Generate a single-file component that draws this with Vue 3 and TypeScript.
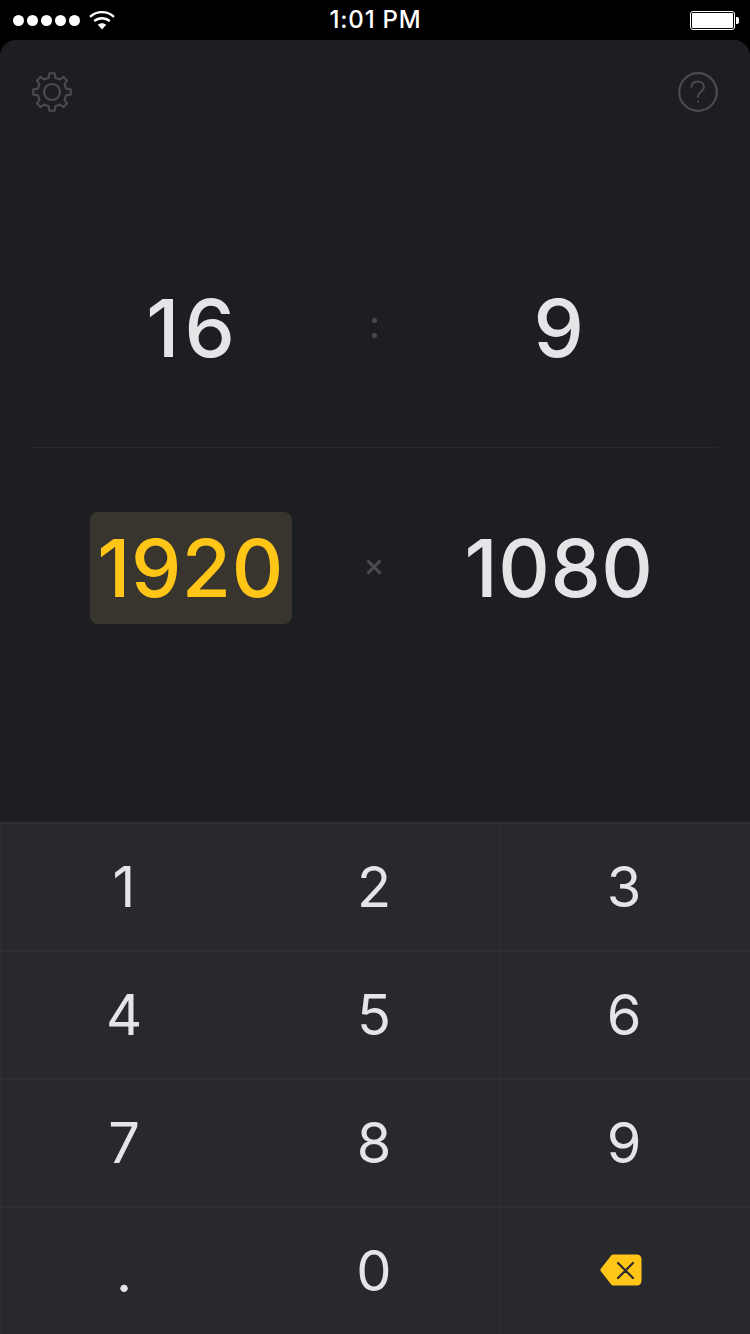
<template>
  <div class="screen">
    <div class="status">
      <div class="status-left">
        <div class="dots"><i v-for="n in 5" :key="n"></i></div>
        <svg class="wifi" width="26" height="20" viewBox="0 0 26 20">
          <path d="M1 6.8C8 .6 18 .6 25 6.8" fill="none" stroke="#fff" stroke-width="2.4" />
          <path d="M5.2 11.2C9.8 7.2 16.2 7.2 20.8 11.2" fill="none" stroke="#fff" stroke-width="2.4" />
          <path d="M8.8 14.8C11.2 12.8 14.8 12.8 17.2 14.8L13 19.4Z" fill="#fff" />
        </svg>
      </div>
      <div class="time">1:01 PM</div>
      <div class="battery"><div class="battery-body"><div class="battery-fill"></div></div><div class="battery-cap"></div></div>
    </div>

    <div class="app">
      <div class="toolbar">
        <svg width="42" height="42" viewBox="0 0 42 42" fill="none" stroke="#4a4b50" stroke-width="2.2" stroke-linejoin="round">
          <path :d="gearPath" />
          <circle cx="21" cy="21" r="8" />
        </svg>
        <svg width="42" height="42" viewBox="0 0 42 42" fill="none" stroke="#4a4b50" stroke-width="2.2" stroke-linecap="round">
          <circle cx="21" cy="21" r="18.8" />
          <path d="M14.5 16C14.8 12.3 17.5 10.5 20.6 10.5C24.2 10.5 27 12.7 27 15.9C27 20.1 21 20.7 21 26" stroke-width="2" />
          <circle cx="21" cy="30.6" r="1.1" fill="#4a4b50" stroke="none" />
        </svg>
      </div>

      <div class="values ratio">
        <div class="cell"><span class="num pair">16</span></div>
        <div class="sep colon"><i></i><i></i></div>
        <div class="cell"><span class="num">9</span></div>
      </div>
      <div class="divider"></div>
      <div class="values size">
        <div class="cell"><span class="num active">1920</span></div>
        <div class="sep">
          <svg width="18" height="18" viewBox="0 0 18 18" stroke="#4a4b50" stroke-width="3"><path d="M2.5 2.5 15.5 15.5M15.5 2.5 2.5 15.5" /></svg>
        </div>
        <div class="cell"><span class="num">1080</span></div>
      </div>
    </div>

    <div class="keypad">
      <div v-for="k in keys" :key="k" class="key">
        <svg v-if="k === 'del'" class="del" width="42" height="32" viewBox="0 0 42 32">
          <path d="M13 0.5H37A4.5 4.5 0 0 1 41.5 5V27A4.5 4.5 0 0 1 37 31.5H13A2.5 2.5 0 0 1 11.4 30.8L1 17.6A2.5 2.5 0 0 1 1 14.4L11.4 1.2A2.5 2.5 0 0 1 13 0.5Z" fill="#ffc517" />
          <path d="M18 9 33 24M33 9 18 24" stroke="#2a2b2f" stroke-width="2.2" stroke-linecap="round" />
        </svg>
        <span v-else :class="{ dot: k === '.' }">{{ k }}</span>
      </div>
    </div>
  </div>
</template>

<script setup lang="ts">
const keys = ["1", "2", "3", "4", "5", "6", "7", "8", "9", ".", "0", "del"];

// eight-toothed cog outline, generated so the teeth stay even
function buildGear(): string {
  const teeth = 8;
  const outer = 18.9;
  const inner = 14.6;
  const pts: string[] = [];
  for (let i = 0; i < teeth; i++) {
    const a = (i / teeth) * Math.PI * 2 - Math.PI / 2;
    const step = (Math.PI * 2) / teeth;
    const list: [number, number][] = [
      [inner, a - step * 0.3],
      [outer, a - step * 0.17],
      [outer, a + step * 0.17],
      [inner, a + step * 0.3],
    ];
    for (const [r, t] of list) {
      pts.push(`${(21 + r * Math.cos(t)).toFixed(2)} ${(21 + r * Math.sin(t)).toFixed(2)}`);
    }
  }
  return "M" + pts.join("L") + "Z";
}

const gearPath = buildGear();
</script>

<style>
body {
  background: #000;
}
</style>

<style scoped>
.screen {
  width: 750px;
  height: 1334px;
  overflow: hidden;
  display: flex;
  flex-direction: column;
  background: #000;
  font-family: Inter, "Liberation Sans", sans-serif;
}

.status {
  height: 40px;
  flex: none;
  display: grid;
  grid-template-columns: 1fr auto 1fr;
  align-items: center;
  padding: 0 11px 0 13px;
  color: #fff;
}
.status-left {
  display: flex;
  align-items: center;
  gap: 9px;
}
.dots {
  display: flex;
  gap: 3px;
}
.dots i {
  width: 11px;
  height: 11px;
  border-radius: 50%;
  background: #fff;
}
.wifi {
  margin-top: -1px;
}
.time {
  font-size: 24px;
  font-weight: 500;
  line-height: 40px;
  letter-spacing: 0.8px;
  margin-left: -1px;
}
.battery {
  justify-self: end;
  display: flex;
  align-items: center;
  gap: 1px;
}
.battery-body {
  width: 45px;
  height: 19px;
  box-sizing: border-box;
  border: 1px solid #fff;
  border-radius: 3px;
  padding: 1px;
}
.battery-fill {
  height: 100%;
  background: #fff;
  border-radius: 1px;
}
.battery-cap {
  width: 3px;
  height: 7px;
  background: #fff;
  border-radius: 0 2px 2px 0;
}

.app {
  flex: 1;
  background: #1d1e22;
  border-radius: 16px 16px 0 0;
  display: flex;
  flex-direction: column;
  padding: 31px 32px 0;
}
.toolbar {
  display: flex;
  justify-content: space-between;
  height: 40px;
  margin-left: -1px;
  margin-right: -1px;
}
.values {
  display: grid;
  grid-template-columns: 306px 60px 306px;
  align-items: center;
  margin: 0 -32px;
  padding-left: 38px;
}
.ratio {
  height: 112px;
  margin-top: 161px;
}
.divider {
  height: 1px;
  background: #28292d;
  margin-top: 63px;
}
.size {
  height: 112px;
  margin-top: 64px;
}
.cell {
  display: flex;
  justify-content: center;
  padding-left: 4px;
}
.num {
  font-size: 80px;
  font-weight: 500;
  line-height: 112px;
  color: #e4e5e7;
  letter-spacing: 0.5px;
}
.pair {
  letter-spacing: 5px;
}
.active {
  box-sizing: border-box;
  color: #ffc517;
  background: #37352d;
  border-radius: 8px;
  width: 202px;
  margin-left: -4px;
  padding-right: 1px;
  text-align: center;
}
.sep {
  display: flex;
  justify-content: center;
  align-items: center;
}
.sep svg {
  margin-top: -2px;
}
.colon {
  flex-direction: column;
  gap: 10px;
}
.colon i {
  width: 5px;
  height: 5px;
  border-radius: 50%;
  background: #4a4b50;
}

.keypad {
  flex: none;
  display: grid;
  grid-template-columns: repeat(3, 250px);
  grid-auto-rows: 128px;
  background: #28292c;
}
.key {
  box-sizing: border-box;
  border-top: 2px solid #2e2f32;
  border-left: 1px solid #2e2f32;
  display: flex;
  align-items: center;
  justify-content: center;
  color: #e4e5e7;
  font-size: 56px;
  font-weight: 400;
}
.key span {
  margin-left: -3px;
}
.dot {
  position: relative;
  top: 1px;
}
.del {
  margin: -2px 9px 0 0;
}
</style>
